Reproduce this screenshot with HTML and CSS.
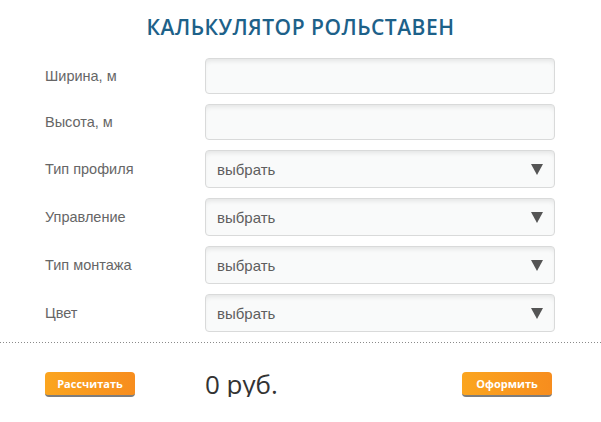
FILE: index.html
```html
<!DOCTYPE html>
<html lang="ru">
<head>
  <meta charset="UTF-8" />
  <meta name="viewport" content="width=device-width, initial-scale=1.0">
  <title>Калькулятор рольставен</title>
  <link rel="stylesheet" href="styles.css">
</head>
<body>
  <div class="calc">
    <h2>КАЛЬКУЛЯТОР РОЛЬСТАВЕН</h2>
    <form class="fields" action="#">
      <label class="row">
        <span class="name">Ширина, м</span>
        <input type="text" name="width">
      </label>
      <label class="row">
        <span class="name">Высота, м</span>
        <input type="text" name="height">
      </label>
      <div class="row">
        <span class="name">Тип профиля</span>
        <div class="select"><span>выбрать</span><svg width="12" height="11" viewBox="0 0 12 11"><path d="M0 0H12L6 11Z" fill="#555"/></svg></div>
      </div>
      <div class="row">
        <span class="name">Управление</span>
        <div class="select"><span>выбрать</span><svg width="12" height="11" viewBox="0 0 12 11"><path d="M0 0H12L6 11Z" fill="#555"/></svg></div>
      </div>
      <div class="row">
        <span class="name">Тип монтажа</span>
        <div class="select"><span>выбрать</span><svg width="12" height="11" viewBox="0 0 12 11"><path d="M0 0H12L6 11Z" fill="#555"/></svg></div>
      </div>
      <div class="row">
        <span class="name">Цвет</span>
        <div class="select"><span>выбрать</span><svg width="12" height="11" viewBox="0 0 12 11"><path d="M0 0H12L6 11Z" fill="#555"/></svg></div>
      </div>
    </form>
    <div class="divider"></div>
    <div class="footer">
      <button class="btn" type="button">Рассчитать</button>
      <div class="total">0 руб.</div>
      <button class="btn" type="button">Оформить</button>
    </div>
  </div>
</body>
</html>
```

FILE: styles.css
```css
html, body {
  margin: 0;
  padding: 0;
  background: #fff;
  font-family: "Liberation Sans", Arial, sans-serif;
}
.calc {
  width: 601px;
}
h2 {
  margin: 13px 0 0;
  height: 45px;
  line-height: 28px;
  text-align: center;
  font-family: "Open Sans", sans-serif;
  font-weight: 600;
  font-size: 21px;
  letter-spacing: 0.5px;
  color: #1d6189;
}
.fields {
  margin: 0;
  padding: 0 46px 0 45px;
}
.row {
  display: flex;
  align-items: center;
  margin-bottom: 10px;
}
.name {
  width: 160px;
  font-size: 14.5px;
  color: #666;
}
.row input,
.select {
  width: 350px;
  box-sizing: border-box;
  border: 1px solid #d9dada;
  border-radius: 4px;
  background: #f9fafa;
  box-shadow: inset 0 4px 5px -2px rgba(0,0,0,0.09);
}
.row input {
  height: 36px;
  padding: 0 10px;
  font-size: 15px;
  outline: none;
}
.select {
  height: 38px;
  display: flex;
  align-items: center;
  justify-content: space-between;
  padding: 0 11px 0 11px;
  font-size: 15px;
  color: #5e5e5e;
}
.select svg {
  margin-top: 1px;
}
.divider {
  height: 1px;
  background: repeating-linear-gradient(90deg, #8a8a8a 0 1px, transparent 1px 3px);
}
.footer {
  display: flex;
  align-items: flex-start;
  padding: 29px 49px 0 45px;
}
.btn {
  display: block;
  width: 90px;
  height: 25px;
  padding: 0 0 1px;
  border: none;
  border-bottom: 2px solid #7d7d7d;
  border-radius: 4px;
  background: linear-gradient(90deg, #fba51f, #f78d1e);
  color: #fff;
  font-family: "Open Sans", sans-serif;
  font-weight: 700;
  font-size: 11px;
  cursor: pointer;
}
.total {
  flex: 1;
  margin-left: 70px;
  font-family: "Open Sans", sans-serif;
  font-size: 26px;
  color: #333;
  line-height: 24px;
}
```
